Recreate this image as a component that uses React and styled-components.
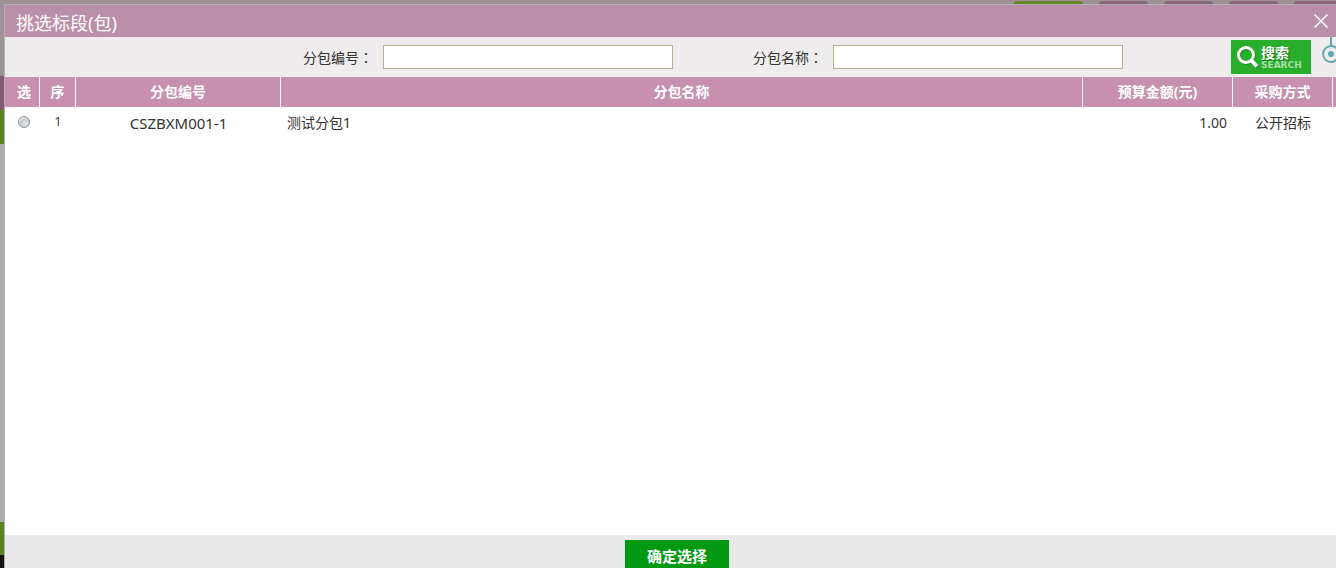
import React, { useState } from 'react'
import styled, { createGlobalStyle } from 'styled-components'

const GlobalStyle = createGlobalStyle`
    * {
        box-sizing: border-box;
    }
    body {
        margin: 0;
        color: #333;
        font-family: 'Noto Sans', 'Noto Sans CJK SC', sans-serif;
        font-size: 14px;
        line-height: 20px;
    }
    button,
    input {
        font: inherit;
    }
    svg {
        display: block;
        flex: none;
    }
`

const Page = styled.div`
    display: grid;
    grid-template-columns: 4px minmax(0, 1fr);
    grid-template-rows: 4px minmax(0, 1fr);
    height: 100vh;
    overflow: hidden;
    background: #adadad;
`

/* what is left visible of the page under the dialog */
const TopStrip = styled.div`
    grid-column: 1 / -1;
    display: flex;
    justify-content: flex-end;
    gap: 16px;
    padding-top: 1px;
    background: #9f9297;
`

const Tab = styled.span`
    width: ${({ $width }) => $width}px;
    border-radius: 4px ${({ $cut }) => ($cut ? 0 : '4px')} 0 0;
    background: ${({ $active }) => ($active ? '#68852b' : '#8c667a')};
`

const SideStrip = styled.div`
    display: flex;
    flex-direction: column;
`

const Block = styled.span`
    flex: ${({ $height }) => ($height ? `0 0 ${$height}px` : '1')};
    background: ${({ $color }) => $color};
`

const Dialog = styled.section`
    display: flex;
    flex-direction: column;
    min-height: 0;
    border-top: 1px solid #b3b0b2;
    border-left: 1px solid #b3b3b3;
    background: #fff;
`

const TitleBar = styled.header`
    display: flex;
    flex: 0 0 32px;
    align-items: center;
    justify-content: space-between;
    padding: 0 8px 0 11px;
    background: #bb8fa7;
    color: #fff;
    h1 {
        margin: 0;
        padding-top: 4px;
        font-size: 18px;
        font-weight: 400;
        line-height: 28px;
    }
`

const CloseButton = styled.button`
    display: flex;
    padding: 0;
    border: 0;
    background: none;
    cursor: pointer;
`

const FilterBar = styled.form`
    display: flex;
    flex: 0 0 40px;
    align-items: center;
    justify-content: flex-end;
    background: #eeeced;
`

const Field = styled.div`
    display: flex;
    align-items: center;
    gap: 10px;
    margin-left: 80px;
    label {
        white-space: nowrap;
    }
    input {
        width: 290px;
        height: 24px;
        padding: 0 4px;
        border: 1px solid #b9ae93;
        background: #fff;
        outline: none;
    }
`

const Colon = styled.span`
    font-family: 'Noto Sans CJK TC', sans-serif;
`

const SearchButton = styled.button`
    display: flex;
    align-items: center;
    gap: 1px;
    width: 80px;
    height: 34px;
    margin: 0 11px 0 108px;
    padding: 0 0 0 5px;
    border: 0;
    background: #28ae2a;
    color: #fff;
    cursor: pointer;
    text-align: left;
`

const SearchText = styled.span`
    display: flex;
    flex-direction: column;
    b {
        font-size: 14px;
        line-height: 16px;
        text-shadow: 1px 1px 1px #126a14;
    }
    small {
        color: #a9dfaa;
        font: bold 9px/8px 'DejaVu Sans', sans-serif;
    }
`

const PinButton = styled.button`
    display: flex;
    align-self: stretch;
    width: 14px;
    padding: 0;
    border: 0;
    background: none;
    overflow: hidden;
    cursor: pointer;
`

const Body = styled.div`
    flex: 1;
    min-height: 0;
    overflow: hidden;
`

const Table = styled.table`
    width: 100%;
    table-layout: fixed;
    border-collapse: separate;
    border-spacing: 0;
    th {
        height: 30px;
        padding: 0;
        border-right: 1px solid #fff;
        background: #c690ae;
        color: #fff;
        font-weight: 700;
    }
    th:first-child {
        padding-left: 4px;
    }
    th:last-child {
        border-right: 0;
    }
`

const Col = styled.col`
    width: ${({ $width }) => ($width ? `${$width}px` : 'auto')};
`

const Cell = styled.td`
    height: 30px;
    padding: 1px 6px 0;
    text-align: ${({ $align }) => $align || 'center'};
    white-space: nowrap;
`

const PickCell = styled(Cell)`
    padding: 0 0 0 2px;
`

const IndexCell = styled(Cell)`
    padding: 0;
    font-size: 12px;
`

const CodeCell = styled(Cell)`
    font-size: 15px;
`

const Radio = styled.input`
    appearance: none;
    display: block;
    width: 12px;
    height: 12px;
    margin: 0 auto;
    border: 1px solid #8e8f8f;
    border-radius: 50%;
    background: ${({ checked }) =>
        checked
            ? 'radial-gradient(#1f5f86 0 2px, #e9ecee 3px)'
            : 'radial-gradient(circle at 60% 65%, #e8eaec, #c3c7cc 55%, #f4f4f4 70%)'};
`

const Footer = styled.footer`
    display: flex;
    flex: 0 0 33px;
    align-items: flex-start;
    justify-content: center;
    padding: 5px 0 0 13px;
    overflow: hidden;
    background: #e9e9e9;
`

const ConfirmButton = styled.button`
    flex: none;
    width: 104px;
    height: 32px;
    padding: 0;
    border: 0;
    background: #009911;
    color: #fff;
    font-size: 15px;
    font-weight: 700;
    cursor: pointer;
`

const fields = [
    { id: 'code', label: '分包编号' },
    { id: 'name', label: '分包名称' },
]

const columns = [
    { title: '选', width: 35 },
    { title: '序', width: 36 },
    { title: '分包编号', width: 205 },
    { title: '分包名称' },
    { title: '预算金额(元)', width: 150 },
    { title: '采购方式', width: 100 },
    { title: '', width: 3 },
]

const rows = [
    {
        code: 'CSZBXM001-1',
        name: '测试分包1',
        budget: '1.00',
        method: '公开招标',
    },
]

const CloseIcon = () => (
    <svg width="14" height="14" viewBox="0 0 14 14" aria-hidden="true">
        <path d="M.5.5l13 13M13.5.5l-13 13" stroke="#fff" strokeWidth="1.5" />
    </svg>
)

const SearchIcon = () => (
    <svg width="24" height="26" viewBox="0 0 24 26" fill="none" aria-hidden="true">
        <g stroke="#126a14" strokeOpacity=".5" transform="translate(1 1)">
            <circle cx="10" cy="11" r="7.5" strokeWidth="3" />
            <path d="M15 16l6 6.5" strokeWidth="4" />
        </g>
        <circle cx="10" cy="11" r="7.5" stroke="#fff" strokeWidth="3" />
        <path d="M15 16l6 6.5" stroke="#fff" strokeWidth="4" />
    </svg>
)

const PinIcon = () => (
    <svg width="20" height="40" viewBox="0 0 20 40" fill="none" aria-hidden="true">
        <path d="M9 0v9" stroke="#63a8ae" strokeWidth="2" />
        <circle cx="9" cy="17" r="8" stroke="#63a8ae" strokeWidth="2" />
        <circle cx="9" cy="17" r="3" fill="#63a8ae" />
    </svg>
)

const App = () => {
    const [picked, setPicked] = useState(null)
    return (
        <>
            <GlobalStyle />
            <Page>
                <TopStrip>
                    <Tab $width={69} $active />
                    <Tab $width={49} />
                    <Tab $width={49} />
                    <Tab $width={49} />
                    <Tab $width={42} $cut />
                </TopStrip>
                <SideStrip>
                    <Block $height={72} $color="#9f9297" />
                    <Block $height={34} $color="#865a71" />
                    <Block $height={34} $color="#5a8223" />
                    <Block $color="#adadad" />
                    <Block $height={33} $color="#5a8223" />
                    <Block $height={13} $color="#151211" />
                </SideStrip>
                <Dialog role="dialog" aria-labelledby="dialog-title">
                    <TitleBar>
                        <h1 id="dialog-title">挑选标段(包)</h1>
                        <CloseButton type="button" aria-label="关闭">
                            <CloseIcon />
                        </CloseButton>
                    </TitleBar>
                    <FilterBar onSubmit={(e) => e.preventDefault()}>
                        {fields.map(({ id, label }) => (
                            <Field key={id}>
                                <label htmlFor={id}>
                                    {label}
                                    <Colon>：</Colon>
                                </label>
                                <input id={id} type="text" />
                            </Field>
                        ))}
                        <SearchButton type="submit">
                            <SearchIcon />
                            <SearchText>
                                <b>搜索</b>
                                <small>SEARCH</small>
                            </SearchText>
                        </SearchButton>
                        <PinButton type="button" aria-label="固定">
                            <PinIcon />
                        </PinButton>
                    </FilterBar>
                    <Body>
                        <Table>
                            <colgroup>
                                {columns.map(({ title, width }) => (
                                    <Col key={title} $width={width} />
                                ))}
                            </colgroup>
                            <thead>
                                <tr>
                                    {columns.map(({ title }) => (
                                        <th key={title} scope="col">
                                            {title}
                                        </th>
                                    ))}
                                </tr>
                            </thead>
                            <tbody>
                                {rows.map((row, i) => (
                                    <tr key={row.code}>
                                        <PickCell>
                                            <Radio
                                                type="radio"
                                                name="package"
                                                aria-label={row.name}
                                                checked={picked === row.code}
                                                onChange={() =>
                                                    setPicked(row.code)
                                                }
                                            />
                                        </PickCell>
                                        <IndexCell>{i + 1}</IndexCell>
                                        <CodeCell>{row.code}</CodeCell>
                                        <Cell $align="left">{row.name}</Cell>
                                        <Cell $align="right">{row.budget}</Cell>
                                        <Cell>{row.method}</Cell>
                                    </tr>
                                ))}
                            </tbody>
                        </Table>
                    </Body>
                    <Footer>
                        <ConfirmButton type="button">确定选择</ConfirmButton>
                    </Footer>
                </Dialog>
            </Page>
        </>
    )
}

export default App
